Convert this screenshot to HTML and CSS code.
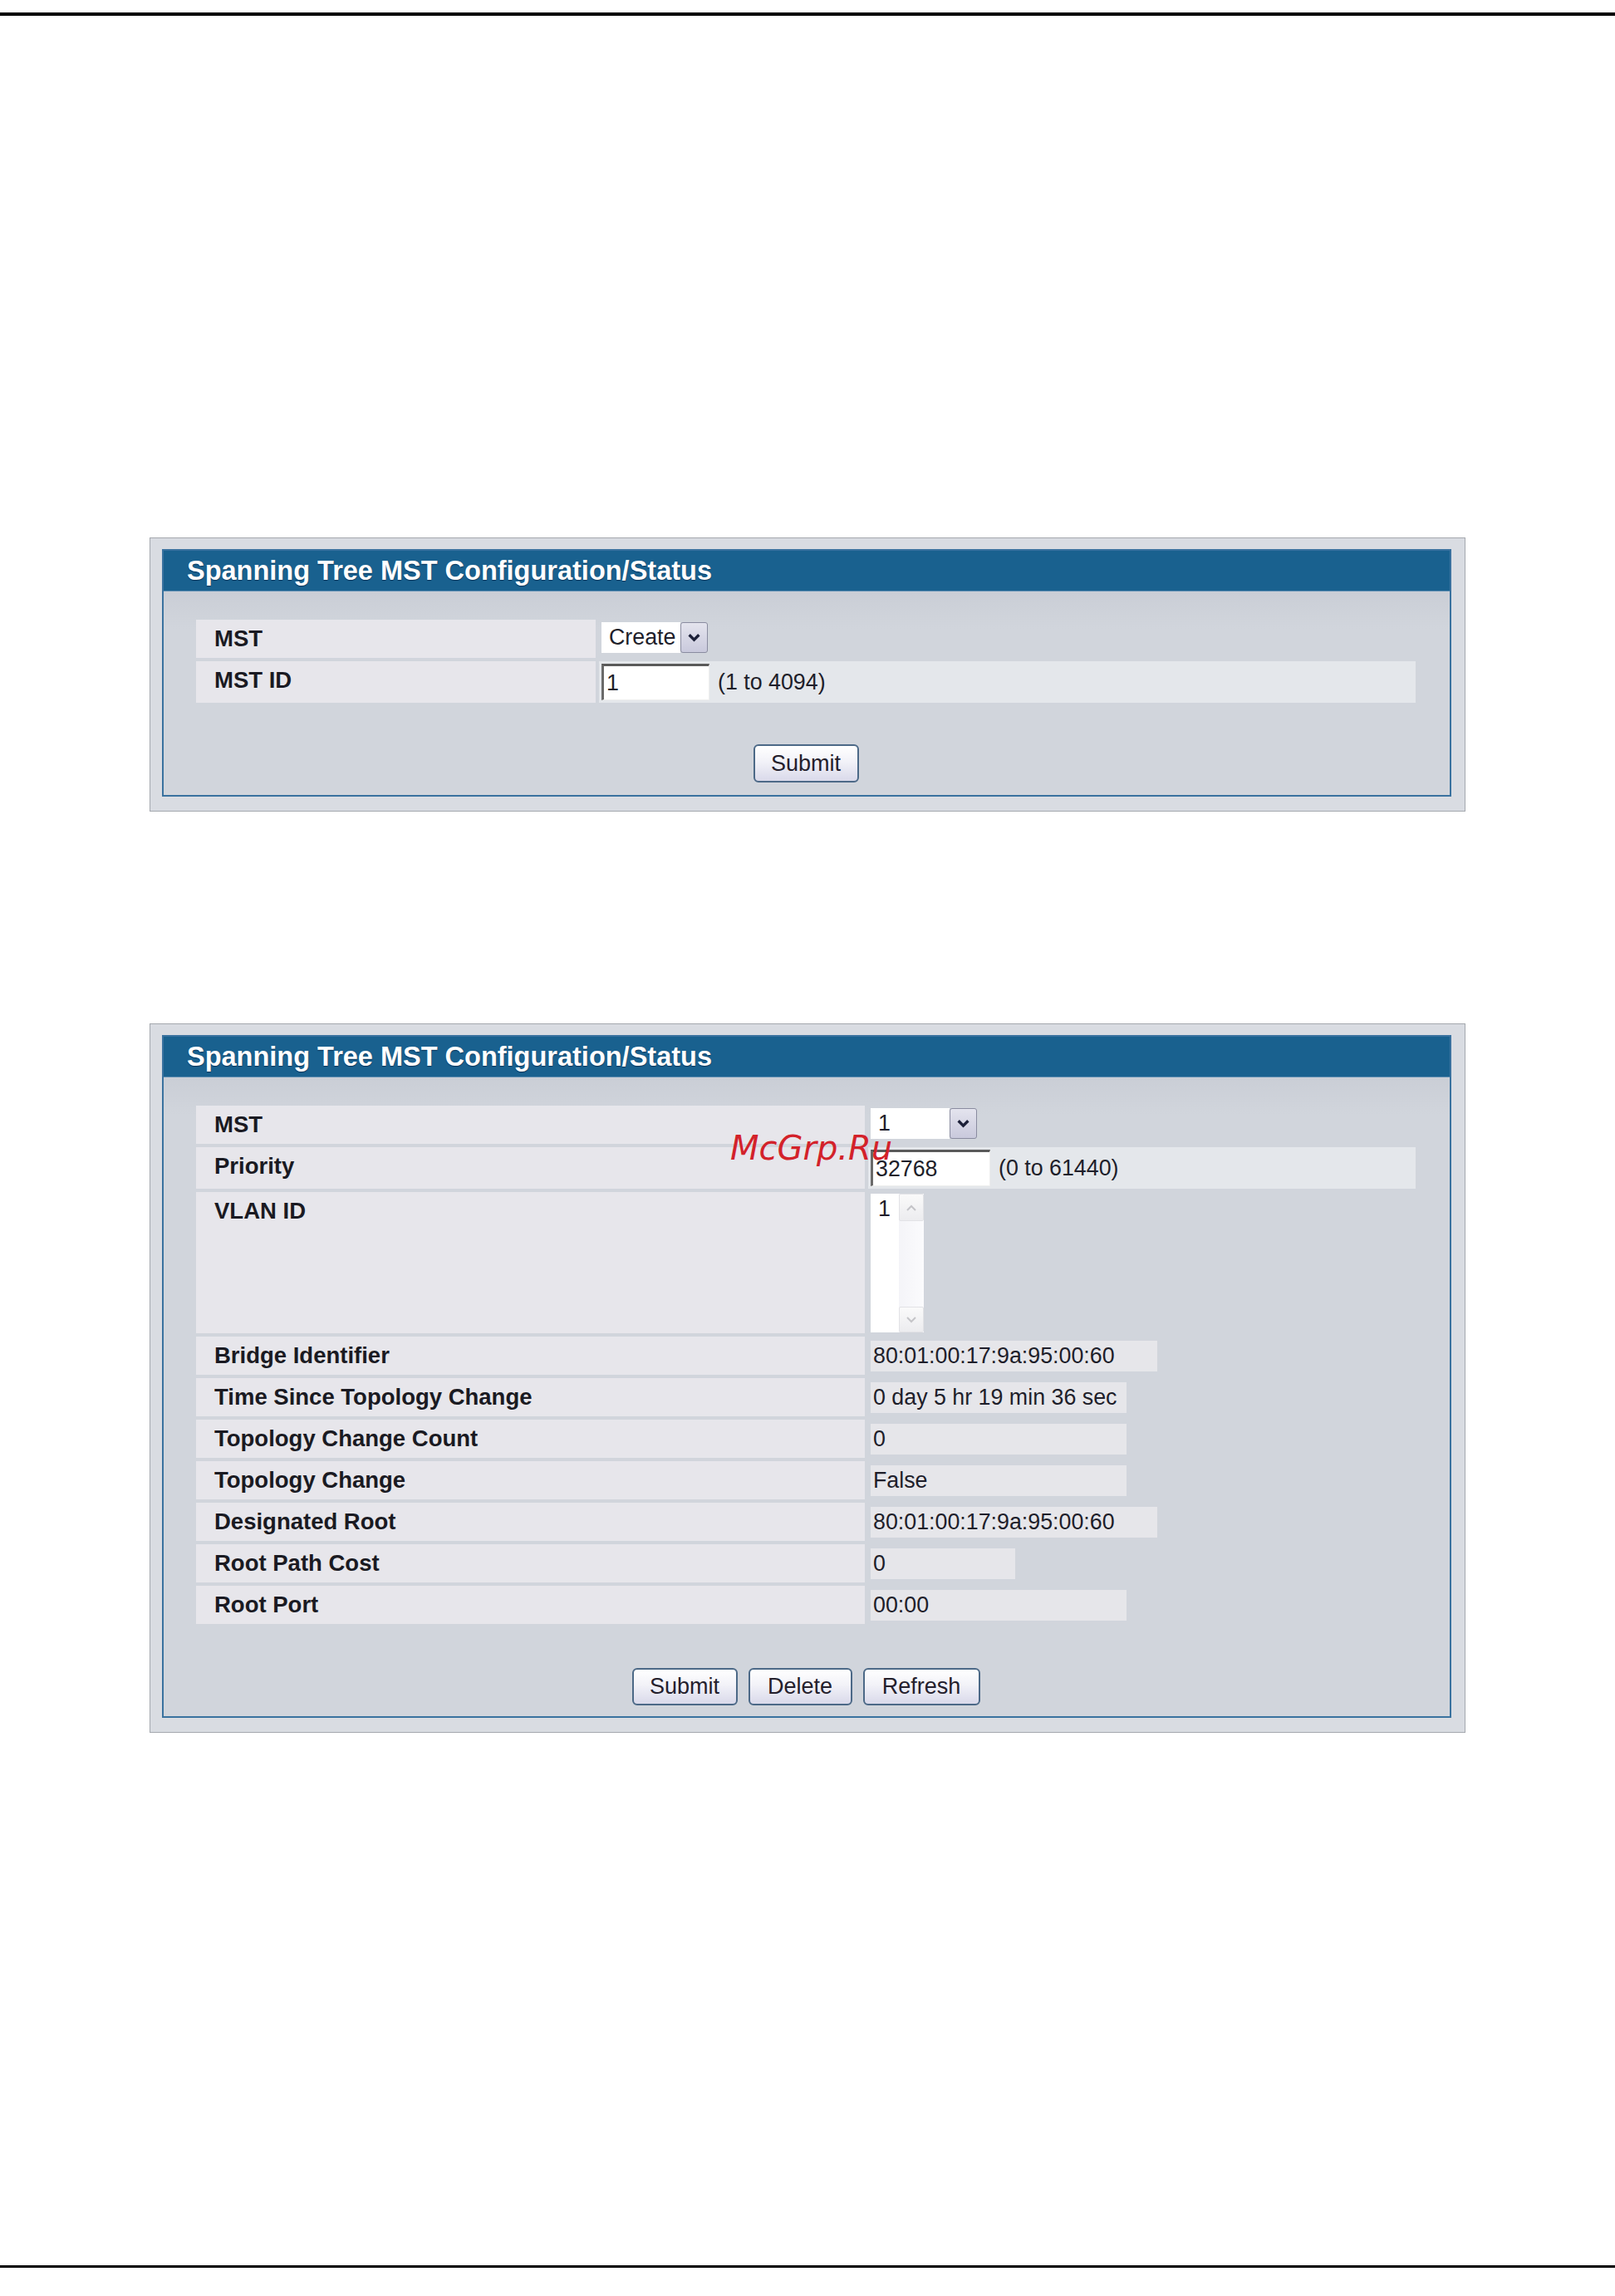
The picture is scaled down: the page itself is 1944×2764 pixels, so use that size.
FILE: index.html
```html
<!DOCTYPE html>
<html lang="en">
<head>
<meta charset="utf-8">
<title>Spanning Tree MST Configuration/Status</title>
<link rel="stylesheet" href="styles.css">
</head>
<body>
<div class="rule rule-top"></div>

<section class="panel panel-1">
  <div class="frame">
    <div class="title">Spanning Tree MST Configuration/Status</div>
    <div class="body body-1">
      <div class="grid grid-1">
        <div class="label">MST</div>
        <div class="value row-std">
          <span class="select select-1"><span class="select-text">Create</span><span class="select-btn"><svg viewBox="0 0 16 12" width="17" height="13"><path d="M2.5 3 L8 8.5 L13.5 3" fill="none" stroke="#1c2038" stroke-width="3.2"/></svg></span></span>
        </div>
        <div class="label">MST ID</div>
        <div class="value row-input band">
          <span class="input input-1">1</span><span class="hint">(1 to 4094)</span>
        </div>
      </div>
      <div class="buttons buttons-1">
        <span class="btn btn-submit">Submit</span>
      </div>
    </div>
  </div>
</section>

<section class="panel panel-2">
  <div class="frame">
    <div class="title">Spanning Tree MST Configuration/Status</div>
    <div class="body body-2">
      <div class="grid grid-2">
        <div class="label">MST</div>
        <div class="value row-std">
          <span class="select select-2"><span class="select-text">1</span><span class="select-btn"><svg viewBox="0 0 16 12" width="17" height="13"><path d="M2.5 3 L8 8.5 L13.5 3" fill="none" stroke="#1c2038" stroke-width="3.2"/></svg></span></span>
        </div>
        <div class="label">Priority</div>
        <div class="value row-input band">
          <span class="input input-2">32768</span><span class="hint">(0 to 61440)</span>
        </div>
        <div class="label">VLAN ID</div>
        <div class="value row-list">
          <span class="listbox">
            <span class="list-text">1</span>
            <span class="scrollbar">
              <span class="scroll-arrow"><svg viewBox="0 0 16 12" width="16" height="12"><path d="M3 9 L8 4 L13 9" fill="none" stroke="#c4c4c8" stroke-width="2"/></svg></span>
              <span class="scroll-track"></span>
              <span class="scroll-arrow scroll-arrow-down"><svg viewBox="0 0 16 12" width="16" height="12"><path d="M3 3 L8 8 L13 3" fill="none" stroke="#c4c4c8" stroke-width="2"/></svg></span>
            </span>
          </span>
        </div>
        <div class="label">Bridge Identifier</div>
        <div class="value row-std"><span class="box box-wide">80:01:00:17:9a:95:00:60</span></div>
        <div class="label">Time Since Topology Change</div>
        <div class="value row-std"><span class="box box-mid">0 day 5 hr 19 min 36 sec</span></div>
        <div class="label">Topology Change Count</div>
        <div class="value row-std"><span class="box box-mid">0</span></div>
        <div class="label">Topology Change</div>
        <div class="value row-std"><span class="box box-mid">False</span></div>
        <div class="label">Designated Root</div>
        <div class="value row-std"><span class="box box-wide">80:01:00:17:9a:95:00:60</span></div>
        <div class="label">Root Path Cost</div>
        <div class="value row-std"><span class="box box-short">0</span></div>
        <div class="label">Root Port</div>
        <div class="value row-std"><span class="box box-mid">00:00</span></div>
      </div>
      <div class="buttons buttons-2">
        <span class="btn btn-submit">Submit</span>
        <span class="btn btn-delete">Delete</span>
        <span class="btn btn-refresh">Refresh</span>
      </div>
    </div>
  </div>
</section>

<div class="rule rule-bottom"></div>

<div class="watermark">McGrp.Ru</div>
</body>
</html>
```

FILE: styles.css
```css
html, body {
  margin: 0;
  padding: 0;
  background: #ffffff;
}

body {
  width: 1944px;
  height: 2764px;
  overflow: hidden;
  font-family: "Liberation Sans", Arial, sans-serif;
  color: #1e1e2a;
}

.rule {
  background: #000000;
  width: 100%;
}

.rule-top {
  margin-top: 15px;
  height: 4px;
}

.rule-bottom {
  margin-top: 641px;
  height: 3px;
}

.panel {
  box-sizing: border-box;
  width: 1584px;
  margin-left: 180px;
  background: #d9dce2;
  border: 1px solid #a4a8ae;
  padding: 13px 16px 17px 14px;
}

.panel-1 {
  margin-top: 628px;
}

.panel-2 {
  margin-top: 255px;
}

.frame {
  border: 2px solid #3a729f;
  background: #d1d5dc;
}

.title {
  height: 49px;
  line-height: 49px;
  background: #19618f;
  border-bottom: 1px solid #5d8db2;
  color: #ffffff;
  font-size: 32.5px;
  font-weight: bold;
  padding-left: 28px;
  text-shadow: 0 1px 1px rgba(0, 20, 50, 0.6);
  box-sizing: border-box;
}

.body {
  padding: 34px 41px 15px 39px;
  background: linear-gradient(#caced6 0, #d1d5dc 45px);
}

.body-2 {
  padding-bottom: 13px;
}

.grid {
  display: grid;
  column-gap: 4px;
  row-gap: 4px;
}

.grid-1 {
  grid-template-columns: 481px 1fr;
}

.grid-2 {
  grid-template-columns: 805px 1fr;
}

.label {
  background: #e7e6eb;
  font-size: 27.5px;
  font-weight: bold;
  color: #1a1a22;
  padding: 7px 0 0 22px;
  line-height: 31px;
  white-space: nowrap;
}

.value {
  box-sizing: border-box;
  padding-left: 3px;
  display: flex;
  align-items: flex-start;
  font-size: 26.8px;
}

.row-std {
  height: 46px;
}

.row-input {
  height: 50px;
}

.row-list {
  height: 170px;
}

.band {
  background: #e4e7eb;
}

/* select */
.select {
  display: flex;
  margin-top: 3px;
  height: 37px;
}

.select-text {
  background: #ffffff;
  line-height: 37px;
  padding-left: 9px;
  box-sizing: border-box;
  font-size: 26.8px;
  width: 95px;
}

.select-btn {
  box-sizing: border-box;
  width: 33px;
  height: 37px;
  border: 1px solid #8a8ca0;
  border-radius: 3px;
  background: linear-gradient(#e4e4ee, #c9c9dc);
  display: flex;
  align-items: center;
  justify-content: center;
}

/* input */
.input {
  box-sizing: border-box;
  margin-top: 3px;
  height: 44px;
  background: #ffffff;
  border-top: 3px solid #5a5a5a;
  border-left: 3px solid #6a6a6a;
  border-right: 1px solid #eeeeee;
  border-bottom: 1px solid #eeeeee;
  line-height: 40px;
  padding-left: 3px;
  font-size: 26.8px;
}

.input-1 {
  width: 130px;
}

.input-2 {
  width: 144px;
}

.hint {
  margin-left: 10px;
  margin-top: 3px;
  line-height: 44px;
}

/* listbox */
.listbox {
  margin-top: 2px;
  width: 64px;
  height: 167px;
  background: #ffffff;
  display: flex;
  justify-content: space-between;
}

.list-text {
  padding-left: 9px;
  line-height: 36px;
  font-size: 26.8px;
}

.scrollbar {
  width: 30px;
  display: flex;
  flex-direction: column;
  background: linear-gradient(90deg, #f4f4f8, #fbfbfd);
}

.scroll-arrow {
  box-sizing: border-box;
  height: 33px;
  border: 1px solid #e2e2e6;
  border-radius: 2px;
  background: linear-gradient(#fafafa, #ececef);
  display: flex;
  align-items: center;
  justify-content: center;
}

.scroll-arrow-down {
  height: 31px;
}

.scroll-track {
  flex: 1;
}

/* value boxes */
.box {
  box-sizing: border-box;
  margin-top: 5px;
  height: 37px;
  line-height: 37px;
  padding-left: 3px;
  background: #e6e6ea;
  white-space: nowrap;
}

.box-wide {
  width: 345px;
}

.box-mid {
  width: 308px;
}

.box-short {
  width: 174px;
}

/* buttons */
.buttons {
  display: flex;
  justify-content: center;
  gap: 13px;
}

.buttons-1 {
  margin-top: 50px;
}

.buttons-2 {
  margin-top: 53px;
}

.btn {
  box-sizing: border-box;
  height: 46px;
  line-height: 42px;
  border: 2px solid #4c6987;
  border-radius: 6px;
  background: linear-gradient(#ffffff 0%, #f2f2f8 45%, #d9d9ea 100%);
  font-size: 27px;
  color: #24202c;
  text-align: center;
}

.buttons-2 .btn {
  height: 45px;
  line-height: 41px;
}

.btn-submit {
  width: 127px;
}

.btn-delete {
  width: 125px;
}

.btn-refresh {
  width: 141px;
}

/* watermark overlay (lies over the form in the reference) */
.watermark {
  position: absolute;
  left: 879px;
  top: 1360px;
  font-family: "DejaVu Sans", sans-serif;
  font-style: italic;
  font-size: 40px;
  line-height: 44px;
  color: #d3222a;
}
```
